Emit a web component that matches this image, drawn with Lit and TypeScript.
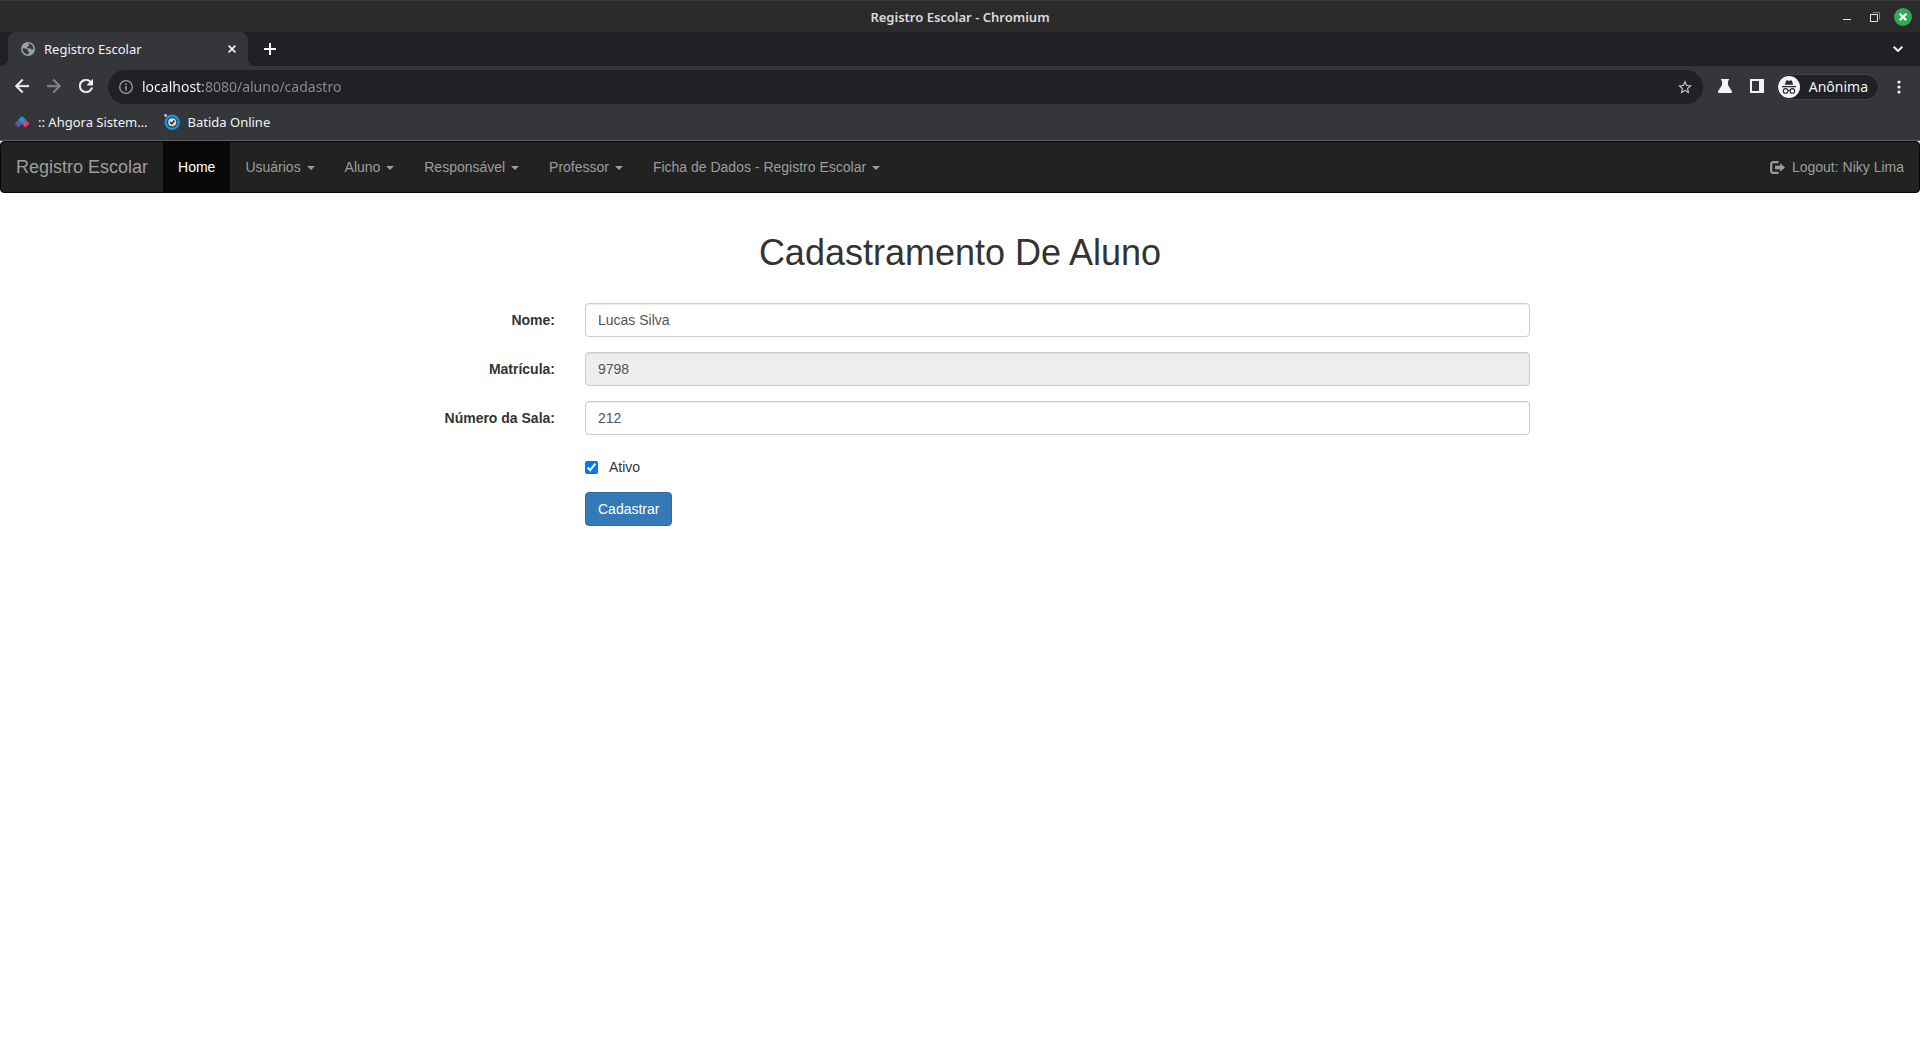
import { LitElement, html, css, svg } from "lit";
import { customElement, property, state } from "lit/decorators.js";

const icons = {
  globe: svg`<svg width="14" height="14" viewBox="0 0 14 14" aria-hidden="true"><circle cx="7" cy="7" r="7" fill="#9aa0a6"/><path d="M7.4 1.6c2.8.3 4.9 2.5 5 5.2-.5.5-1 .9-1.800.7-.7-.2-.8-1.200-1.600-1.300-.9-.1-1.700.5-2.500.1-.6-.4-.5-1.300.1-1.600.5-.3 1.300-.1 1.500-.7.2-.7-.9-1.400-.7-2.400zM1.600 6.200c1.500.1 3.600.1 4.700 1.100.7.7.2 1.500.7 1.900.5.3 1.100.2 1.200.8.1.8-1 1.300-1.200 2.400C3.900 12.400 1.400 9.500 1.600 6.200z" fill="#35363a"/></svg>`,
  close: svg`<svg width="8" height="8" viewBox="0 0 8 8" aria-hidden="true"><path d="M.6.6l6.800 6.800M7.400.6L.6 7.400" stroke="#f1f3f4" stroke-width="1.700"/></svg>`,
  plus: svg`<svg width="12" height="12" viewBox="0 0 12 12" aria-hidden="true"><path d="M6 0v12M0 6h12" stroke="#fff" stroke-width="2"/></svg>`,
  chevron: svg`<svg width="10" height="6" viewBox="0 0 10 6" aria-hidden="true"><path d="M.7.7L5 5 9.300.7" fill="none" stroke="#f1f3f4" stroke-width="2"/></svg>`,
  back: svg`<svg width="14" height="14" viewBox="4 4 16 16" aria-hidden="true"><path fill="#f1f3f4" stroke="#f1f3f4" stroke-width=".4" d="M20 11H7.830l5.590-5.590L12 4l-8 8 8 8 1.410-1.410L7.830 13H20v-2z"/></svg>`,
  forward: svg`<svg width="14" height="14" viewBox="4 4 16 16" aria-hidden="true"><path fill="#85868a" stroke="#85868a" stroke-width=".4" d="M12 4l-1.410 1.410L16.170 11H4v2h12.170l-5.580 5.590L12 20l8-8z"/></svg>`,
  reload: svg`<svg width="14" height="14" viewBox="4 4 16 16" aria-hidden="true"><path fill="#f1f3f4" stroke="#f1f3f4" stroke-width=".4" d="M17.650 6.350A7.958 7.958 0 0 0 12 4c-4.420 0-7.990 3.580-7.990 8s3.570 8 7.990 8c3.730 0 6.840-2.550 7.730-6h-2.080A5.990 5.990 0 0 1 12 18c-3.310 0-6-2.690-6-6s2.690-6 6-6c1.660 0 3.140.69 4.220 1.780L13 11h7V4l-2.350 2.350z"/></svg>`,
  info: svg`<svg width="14" height="14" viewBox="0 0 14 14" aria-hidden="true"><circle cx="7" cy="7" r="6.300" fill="none" stroke="#9aa0a6" stroke-width="1.300"/><path d="M7 6v4.500M7 3.500v1.500" stroke="#9aa0a6" stroke-width="1.500"/></svg>`,
  star: svg`<svg width="14" height="14" viewBox="2 2 20 19" aria-hidden="true"><path fill="#c4c7ca" d="M22 9.240l-7.190-.62L12 2 9.190 8.630 2 9.240l5.460 4.730L5.820 21 12 17.270 18.180 21l-1.630-7.030L22 9.240zM12 15.400l-3.760 2.270 1-4.280-3.320-2.880 4.380-.38L12 6.100l1.710 4.040 4.380.38-3.320 2.880 1 4.280L12 15.400z"/></svg>`,
  flask: svg`<svg width="14" height="14" viewBox="0 0 14 14" aria-hidden="true"><path fill="#f1f3f4" d="M3 0h8v1.600h-1V6l3.800 6c.6 1-.1 2-1.200 2H1.400C.3 14-.4 13 .2 12L4 6V1.600H3z"/></svg>`,
  panel: svg`<svg width="14" height="14" viewBox="0 0 14 14" aria-hidden="true"><path fill="#f1f3f4" fill-rule="evenodd" d="M0 0h14v14H0zM2 2v10h7V2z"/></svg>`,
  incognito: svg`<svg width="22" height="22" viewBox="0 0 22 22" aria-hidden="true"><circle cx="11" cy="11" r="11" fill="#f1f3f4"/><path fill="#2b2c30" d="M9 4.300l2 .6 2-.6c.4-.1.700.1.900.5l1.300 3.900H6.800l1.300-3.900c.2-.4.500-.6.900-.5zM4 10h14v1.200H4z"/><g fill="none" stroke="#2b2c30" stroke-width="1.100"><circle cx="7.600" cy="14.900" r="2.300"/><circle cx="14.400" cy="14.900" r="2.300"/><path d="M9.900 14.600q1.100-.8 2.200 0"/></g></svg>`,
  dots: svg`<svg width="4" height="14" viewBox="0 0 4 14" aria-hidden="true"><g fill="#f1f3f4"><circle cx="2" cy="2" r="1.600"/><circle cx="2" cy="7" r="1.600"/><circle cx="2" cy="12" r="1.600"/></g></svg>`,
  minimize: svg`<svg width="8" height="10" viewBox="0 0 8 10" aria-hidden="true"><path d="M0 7.500h8" stroke="#e6e6e6"/></svg>`,
  restore: svg`<svg width="10" height="10" viewBox="0 0 10 10" aria-hidden="true"><path d="M2.500.5h7v7" fill="none" stroke="#858585"/><path d="M.5 2.500h7v7h-7z" fill="none" stroke="#e6e6e6"/></svg>`,
  windowClose: svg`<svg width="18" height="18" viewBox="0 0 18 18" aria-hidden="true"><circle cx="9" cy="9" r="9" fill="#35a854"/><path d="M5.700 5.700l6.600 6.600M12.300 5.700l-6.600 6.600" stroke="#fff" stroke-width="2.200"/></svg>`,
  ahgora: svg`<svg width="16" height="16" viewBox="0 0 16 16" aria-hidden="true"><path d="M4 6l4 4-3.500 3.500L.5 9.500z" fill="#6a52a3"/><path d="M12 6l3.500 3.500-4 4L8 10z" fill="#ee3a72"/><path d="M8 2l4 4-4 4-4-4z" fill="#0d9ddb"/></svg>`,
  batida: svg`<svg width="16" height="16" viewBox="0 0 16 16" aria-hidden="true"><path d="M.2.3h2.500v2.500H.9z" fill="#dce8f3"/><circle cx="8.200" cy="8.200" r="6.500" fill="#3a3b40" stroke="#1b91dc" stroke-width="2.400"/><circle cx="8.200" cy="8.200" r="4" fill="#d9dde3"/><path d="M6.100 8.100l1.600 1.700 2.800-3.300" fill="none" stroke="#303238" stroke-width="1.500"/></svg>`,
  logout: svg`<svg width="15" height="13" viewBox="0 0 15 13" aria-hidden="true"><path d="M8.500 1.200H3.200a2 2 0 0 0-2 2v6.600a2 2 0 0 0 2 2h5.300" fill="none" stroke="#9d9d9d" stroke-width="2.200"/><path d="M10 2.200l5 4.300-5 4.300V8.200H5V4.800h5z" fill="#9d9d9d"/></svg>`,
};

@customElement("browser-chrome")
class BrowserChrome extends LitElement {
  static styles = css`
    :host { display: block; font-family: "Noto Sans", "Open Sans", sans-serif; font-size: 13px; color: #f1f3f4; background: #35363a; border-bottom: 1px solid #5f6063; }
    * { box-sizing: border-box; }
    svg { display: block; flex: none; }
    button { display: grid; place-items: center; margin: 0; padding: 0; border: 0; background: none; color: inherit; font: inherit; }
    .titlebar { display: grid; grid-template-columns: 1fr auto 1fr; align-items: center; height: 32px; padding: 0 8px; background: #2b2b2b; border-top: 1px solid #3b3b3b; }
    .title { grid-column: 2; font-weight: 600; color: #dcdcdc; line-height: 20px; }
    .controls { display: flex; justify-content: flex-end; align-items: center; gap: 10px; }
    .controls button { width: 18px; height: 18px; }
    .tabs { display: flex; align-items: center; height: 34px; background: #202124; padding-right: 12px; }
    .curve { align-self: flex-end; width: 8px; height: 8px; }
    .curve.left { background: radial-gradient(circle at 0 0, #202124 8px, #35363a 9px); }
    .curve.right { background: radial-gradient(circle at 100% 0, #202124 8px, #35363a 9px); }
    .tab { display: flex; align-items: center; width: 240px; height: 34px; padding: 0 8px 0 13px; gap: 9px; background: #35363a; border-radius: 8px 8px 0 0; }
    .tab-title { flex: 1; white-space: nowrap; line-height: 20px; }
    .tab button { width: 16px; height: 16px; }
    .new-tab { width: 28px; height: 28px; }
    .search-tabs { width: 20px; height: 20px; margin-left: auto; }
    .toolbar { display: flex; align-items: center; height: 42px; padding: 0 13px 0 14px; }
    .nav { display: flex; gap: 16px; padding: 0 14px 2px 0; }
    .nav button { width: 16px; height: 28px; }
    .omnibox { flex: 1; display: flex; align-items: center; gap: 9px; height: 34px; padding: 0 11px; border-radius: 17px; background: #202124; }
    .url { flex: 1; min-width: 0; height: 24px; padding: 0 0 2px; border: 0; outline: 0; font-family: inherit; font-size: 14px; color: transparent; background: linear-gradient(to right, #fff 61px, #8b8e92 61px); -webkit-background-clip: text; background-clip: text; }
    .tools { display: flex; align-items: center; gap: 16px; padding: 0 11px 2px 14px; }
    .tools button { width: 16px; height: 28px; }
    .profile { display: flex; align-items: center; gap: 9px; height: 26px; padding: 0 10px 0 1px; border: 1px solid #424347; border-radius: 13px; background: #202124; font-size: 14px; line-height: 20px; }
    .menu { width: 16px; height: 28px; margin-left: 12px; }
    .bookmarks { display: flex; align-items: flex-start; gap: 16px; height: 32px; padding: 4px 14px 0; }
    .bookmark { display: flex; align-items: center; gap: 8px; color: inherit; text-decoration: none; line-height: 20px; }
  `;

  @property() pageTitle = "";
  @property() address = "";

  render() {
    return html`
      <div class="titlebar">
        <span class="title">${this.pageTitle} - Chromium</span>
        <div class="controls">
          <button aria-label="Minimizar">${icons.minimize}</button>
          <button aria-label="Restaurar">${icons.restore}</button>
          <button aria-label="Fechar">${icons.windowClose}</button>
        </div>
      </div>
      <div class="tabs">
        <span class="curve left"></span>
        <div class="tab">
          ${icons.globe}
          <span class="tab-title">${this.pageTitle}</span>
          <button aria-label="Fechar guia">${icons.close}</button>
        </div>
        <span class="curve right"></span>
        <button class="new-tab" aria-label="Nova guia">${icons.plus}</button>
        <button class="search-tabs" aria-label="Pesquisar guias">${icons.chevron}</button>
      </div>
      <div class="toolbar">
        <div class="nav">
          <button aria-label="Voltar">${icons.back}</button>
          <button aria-label="Avançar">${icons.forward}</button>
          <button aria-label="Recarregar">${icons.reload}</button>
        </div>
        <div class="omnibox">
          ${icons.info}
          <input class="url" type="text" aria-label="Endereço" spellcheck="false" .value=${this.address} />
          <button aria-label="Favoritar">${icons.star}</button>
        </div>
        <div class="tools">
          <button aria-label="Experimentos">${icons.flask}</button>
          <button aria-label="Painel lateral">${icons.panel}</button>
        </div>
        <button class="profile">${icons.incognito}<span>Anônima</span></button>
        <button class="menu" aria-label="Menu">${icons.dots}</button>
      </div>
      <nav class="bookmarks" aria-label="Favoritos">
        <a class="bookmark" href="#">${icons.ahgora}<span>:: Ahgora Sistem…</span></a>
        <a class="bookmark" href="#">${icons.batida}<span>Batida Online</span></a>
      </nav>
    `;
  }
}

@customElement("school-navbar")
class SchoolNavbar extends LitElement {
  static styles = css`
    :host { display: block; font-size: 14px; line-height: 20px; }
    .navbar { display: flex; align-items: stretch; background: #222; border: 1px solid #080808; border-radius: 4px; }
    a { display: block; padding: 15px; color: #9d9d9d; text-decoration: none; white-space: nowrap; }
    .brand { font-size: 18px; }
    .links { display: flex; margin: 0; padding: 0; list-style: none; }
    .active { color: #fff; background: #080808; }
    .caret { display: inline-block; margin-left: 2px; vertical-align: middle; border-top: 4px solid; border-left: 4px solid transparent; border-right: 4px solid transparent; }
    .logout { display: flex; align-items: center; gap: 7px; margin-left: auto; }
  `;

  private menus = ["Usuários", "Aluno", "Responsável", "Professor", "Ficha de Dados - Registro Escolar"];

  render() {
    return html`
      <nav class="navbar">
        <a class="brand" href="#">Registro Escolar</a>
        <ul class="links">
          <li><a class="active" href="#">Home</a></li>
          ${this.menus.map((name) => html`<li><a href="#">${name} <span class="caret"></span></a></li>`)}
        </ul>
        <a class="logout" href="#">${icons.logout}<span>Logout: Niky Lima</span></a>
      </nav>
    `;
  }
}

@customElement("student-form")
class StudentForm extends LitElement {
  static styles = css`
    :host { display: block; font-size: 14px; line-height: 20px; color: #333; }
    * { box-sizing: border-box; }
    .container { max-width: 1170px; margin: 0 auto; padding-top: 40px; }
    h1 { margin: 0 0 30px; font-size: 36px; font-weight: 500; line-height: 40px; text-align: center; }
    .row { display: grid; grid-template-columns: 2fr 10fr; margin-bottom: 15px; }
    .label { padding: 7px 15px 0; font-weight: 700; text-align: right; }
    .field { padding: 0 15px; }
    .offset { grid-column: 2; padding: 0 15px; }
    .control { display: block; width: 100%; height: 34px; padding: 6px 12px; font: inherit; color: #555; background: #fff; border: 1px solid #ccc; border-radius: 4px; box-shadow: inset 0 1px 1px rgba(0, 0, 0, 0.075); outline: 0; }
    .control[readonly] { background: #eee; }
    .check { display: flex; align-items: center; gap: 11px; min-height: 27px; padding-top: 7px; }
    .check input { width: 13px; height: 13px; margin: 1px 0 0; }
    .submit { height: 34px; padding: 6px 12px; font: inherit; color: #fff; background: #337ab7; border: 1px solid #2e6da4; border-radius: 4px; }
  `;

  @state() private nome = "Lucas Silva";
  @state() private sala = "212";
  @state() private ativo = true;

  render() {
    return html`
      <main class="container">
        <h1>Cadastramento De Aluno</h1>
        <form @submit=${(e: Event) => e.preventDefault()}>
          <div class="row">
            <label class="label" for="nome">Nome:</label>
            <div class="field"><input class="control" id="nome" type="text" .value=${this.nome}
              @input=${(e: Event) => (this.nome = (e.target as HTMLInputElement).value)} /></div>
          </div>
          <div class="row">
            <label class="label" for="matricula">Matrícula:</label>
            <div class="field"><input class="control" id="matricula" type="text" value="9798" readonly /></div>
          </div>
          <div class="row">
            <label class="label" for="sala">Número da Sala:</label>
            <div class="field"><input class="control" id="sala" type="text" .value=${this.sala}
              @input=${(e: Event) => (this.sala = (e.target as HTMLInputElement).value)} /></div>
          </div>
          <div class="row">
            <div class="offset">
              <label class="check"><input type="checkbox" .checked=${this.ativo}
                @change=${(e: Event) => (this.ativo = (e.target as HTMLInputElement).checked)} /><span>Ativo</span></label>
            </div>
          </div>
          <div class="row">
            <div class="offset"><button class="submit" type="submit">Cadastrar</button></div>
          </div>
        </form>
      </main>
    `;
  }
}

@customElement("app-root")
class AppRoot extends LitElement {
  static styles = css`
    :host { display: block; min-height: 100vh; background: #fff; font-family: "Liberation Sans", Arial, sans-serif; }
  `;

  render() {
    return html`
      <browser-chrome pageTitle="Registro Escolar" address="localhost:8080/aluno/cadastro"></browser-chrome>
      <school-navbar></school-navbar>
      <student-form></student-form>
    `;
  }
}
